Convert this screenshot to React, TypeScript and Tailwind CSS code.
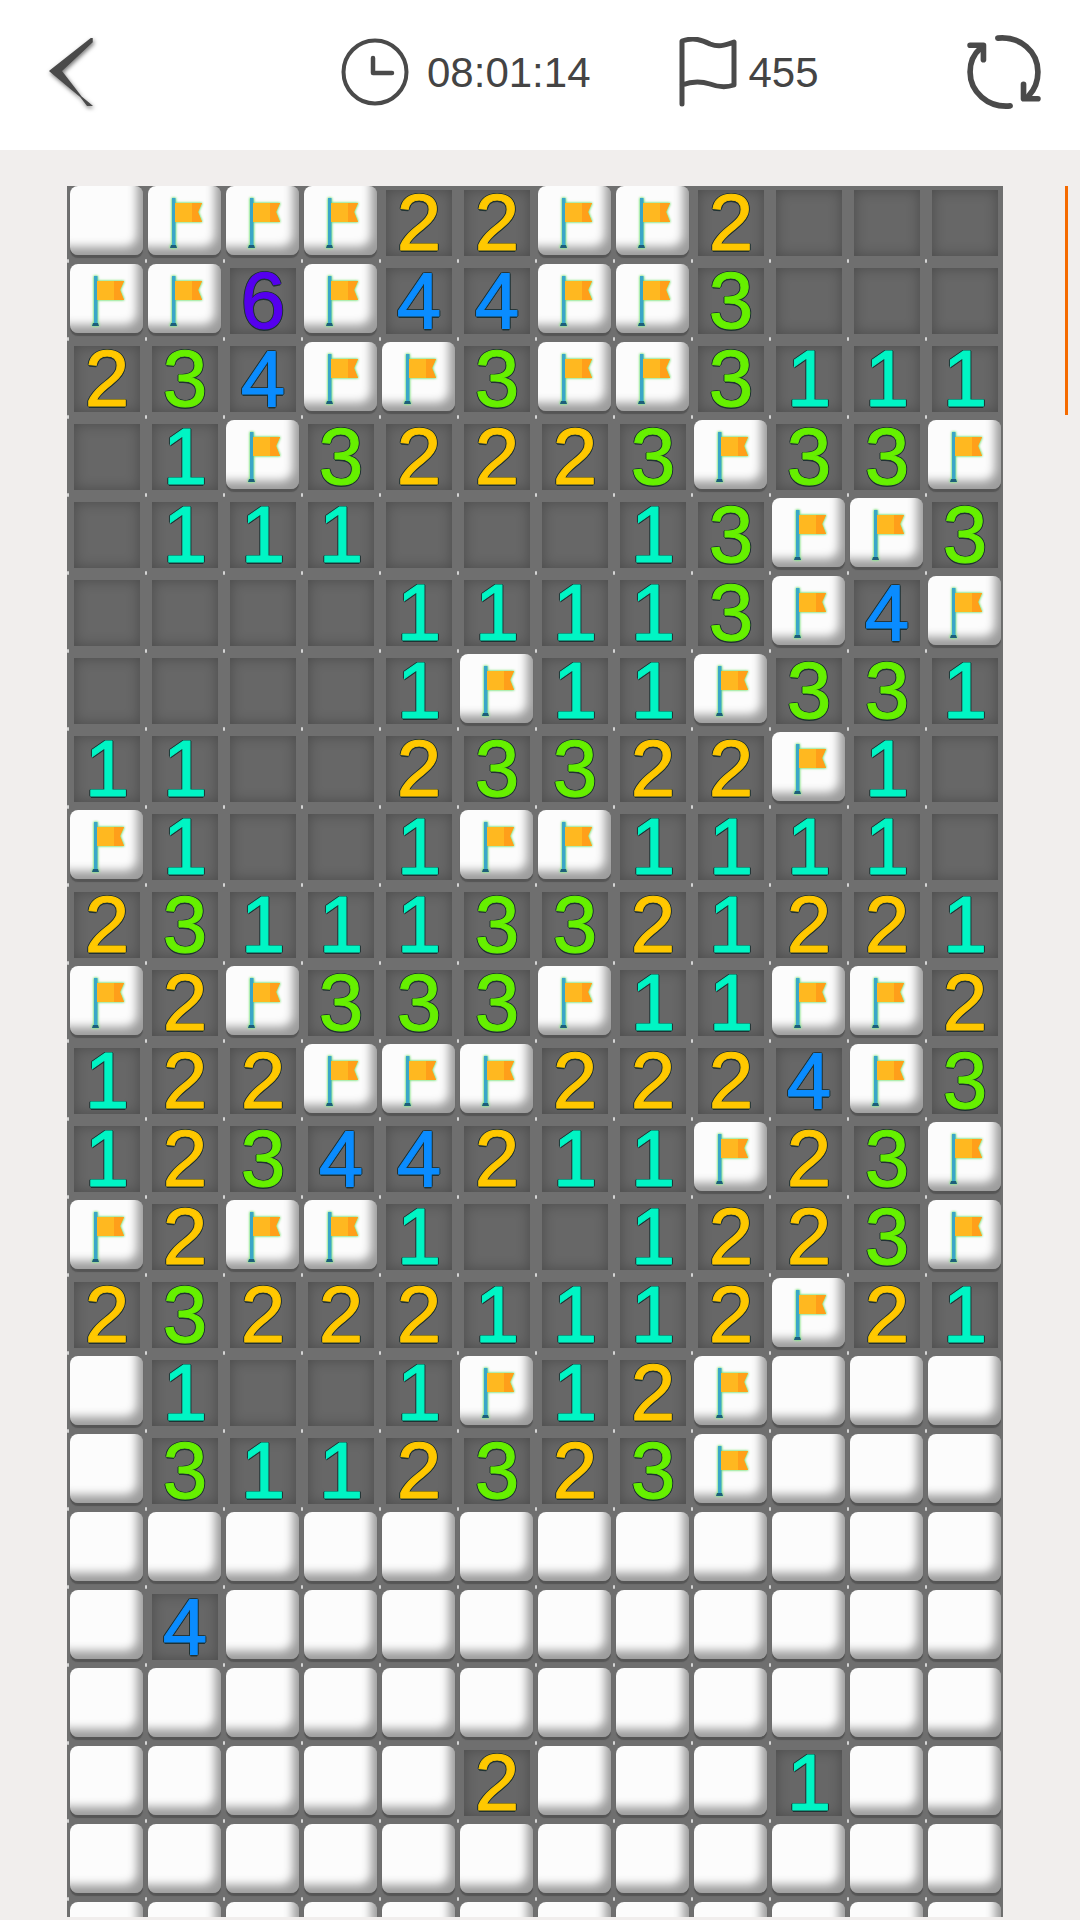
import React from "react";

const board = [
  ".FFF22FF2___",
  "FF6F44FF3___",
  "234FF3FF3111",
  "_1F32223F33F",
  "_111___13FF3",
  "____11113F4F",
  "____1F11F331",
  "11__23322F1_",
  "F1__1FF1111_",
  "231113321221",
  "F2F333F11FF2",
  "122FFF2224F3",
  "12344211F23F",
  "F2FF1__1223F",
  "232221112F21",
  ".1__1F12F...",
  ".3112323F...",
  "............",
  ".4..........",
  "............",
  ".....2...1..",
  "............",
  "............",
];

const digitClass: Record<string, string> = {
  "1": "text-[#00f5c4]",
  "2": "text-[#ffc800]",
  "3": "text-[#66f000]",
  "4": "text-[#0a8cff]",
  "6": "text-[#5500ee]",
};

function TileFlag() {
  return (
    <svg viewBox="0 0 73 69" className="h-[69px] w-[73px] [filter:drop-shadow(0_0_1px_#6fe080)_drop-shadow(0_0_1px_#9fe88f)]">
      <rect x="24" y="12" width="3.5" height="49" fill="#3aa6c8" />
      <path d="M23 59h5l1 3h-7z" fill="#1d5f7a" />
      <path d="M27 17h27l-4 9 4 10H27z" fill="#ffb820" />
      <path d="M44 17h10l-4 9 4 10H44z" fill="#ff9f1a" />
    </svg>
  );
}

function Cell({ value }: { value: string }) {
  const closed = value === "." || value === "F";
  return (
    <div className="relative h-[78px] w-[78px]">
      {closed ? (
        <div className="ml-[3px] h-[69px] w-[73px] rounded-[8px] bg-[#fcfcfc] shadow-[inset_-10px_-12px_10px_-4px_rgba(0,0,0,0.38),0_3px_1px_#555555]">
          {value === "F" && <TileFlag />}
        </div>
      ) : (
        <div className="ml-[7px] mt-[4px] flex h-[66px] w-[66px] items-center justify-center bg-[#676767] shadow-[inset_0_0_14px_rgba(0,0,0,0.28)]">
          {value !== "_" && (
            <span
              className={`block font-['Liberation_Sans',sans-serif] text-[80px] leading-[66px] [-webkit-text-stroke:1px_currentColor] [text-shadow:-1.5px_0_#1f3233,1.5px_0_#1f3233,0_-1.5px_#1f3233,0_1.5px_#1f3233,-1px_-1px_#1f3233,1px_1px_#1f3233,-1px_1px_#1f3233,1px_-1px_#1f3233] ${digitClass[value]}`}
            >
              {value}
            </span>
          )}
        </div>
      )}
      <div className="absolute left-0 top-[73px] h-[4px] w-[2px] rounded-full bg-white/70" />
    </div>
  );
}

export default function App() {
  return (
    <div className="h-[1920px] w-[1080px] overflow-hidden bg-[#f1eeed] font-['Liberation_Sans',sans-serif]">
      <header className="flex h-[150px] items-center bg-white pb-[6px] text-[42px] text-[#444444]">
        <svg viewBox="0 0 44 68" className="ml-[49px] h-[68px] w-[44px] [filter:drop-shadow(1px_2px_2px_rgba(0,0,0,0.55))]">
          <path d="M43 0 1 33l42 35-4 0L12 33 43 4z" fill="#4a4a4a" stroke="#4a4a4a" strokeWidth="1.5" strokeLinejoin="round" />
        </svg>
        <svg viewBox="0 0 68 68" className="ml-[248px] h-[68px] w-[68px]">
          <circle cx="34" cy="34" r="31.5" fill="none" stroke="#4a4a4a" strokeWidth="4" />
          <path d="M32 20v15h19" fill="none" stroke="#4a4a4a" strokeWidth="4.5" strokeLinecap="round" strokeLinejoin="round" />
        </svg>
        <span className="ml-[18px]">08:01:14</span>
        <svg viewBox="0 0 58 70" className="ml-[88px] h-[70px] w-[58px]">
          <path
            d="M3 67V4c12-4 20-1 28 3 8 3 14 2 24-2v43c-9 3-16 2-24-1-9-3-18-3-28 1"
            fill="none"
            stroke="#4a4a4a"
            strokeWidth="5"
            strokeLinecap="round"
            strokeLinejoin="round"
          />
        </svg>
        <span className="ml-[12px]">455</span>
        <svg viewBox="0 0 72 72" className="ml-[148px] h-[74px] w-[74px]">
          <path d="M30 3c22-2 39 13 39 33 0 9-3 17-9 23" fill="none" stroke="#4a4a4a" strokeWidth="5.5" strokeLinecap="round" />
          <path d="M42 69C20 71 3 55 3 36c0-9 3-17 10-23" fill="none" stroke="#4a4a4a" strokeWidth="5.5" strokeLinecap="round" />
          <path d="M3 10h13v14" fill="none" stroke="#4a4a4a" strokeWidth="5.5" strokeLinecap="round" strokeLinejoin="round" />
          <path d="M69 62H55V48" fill="none" stroke="#4a4a4a" strokeWidth="5.5" strokeLinecap="round" strokeLinejoin="round" />
        </svg>
      </header>
      <main className="flex h-[1770px] pl-[67px] pt-[36px]">
        <div className="h-[1731px] w-[936px] shrink-0 overflow-hidden">
          <div className="grid grid-cols-12 bg-[#6f6f6f]">
            {board.flatMap((row, r) =>
              row.split("").map((value, c) => <Cell key={`${r}-${c}`} value={value} />)
            )}
          </div>
        </div>
        <div className="ml-[62px] h-[229px] w-[3px] shrink-0 bg-[#f56a00]" />
      </main>
    </div>
  );
}
